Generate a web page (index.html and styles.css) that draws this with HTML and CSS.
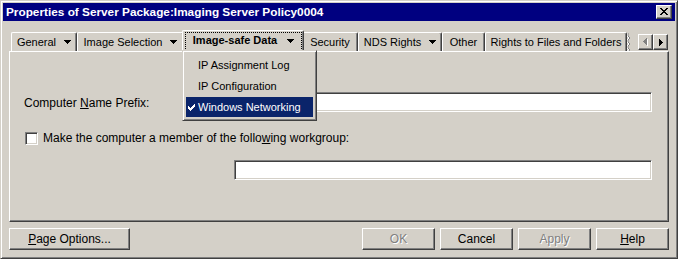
FILE: index.html
```html
<!DOCTYPE html>
<html lang="en">
<head>
    <meta charset="UTF-8">
    <title>Properties of Server Package</title>
    <link rel="stylesheet" href="styles.css">
</head>
<body>
    <div class="window">
        <div class="titlebar">
            <span class="title">Properties of Server Package:Imaging Server Policy0004</span>
            <span class="close-btn">
                <svg width="8" height="7" viewBox="0 0 8 7"><path d="M0 0h2v1H0zM6 0h2v1H6zM1 1h2v1H1zM5 1h2v1H5zM2 2h4v1H2zM3 3h2v1H3zM2 4h4v1H2zM1 5h2v1H1zM5 5h2v1H5zM0 6h2v1H0zM6 6h2v1H6z" fill="#000"/></svg>
            </span>
        </div>

        <div class="content">
            <div class="tabstrip">
                <div class="tab tab-general">General <svg class="caret" width="7" height="4"><path d="M0 0h7v1H0zM1 1h5v1H1zM2 2h3v1H2zM3 3h1v1H3z"/></svg></div>
                <div class="tab tab-image">Image Selection <svg class="caret" width="7" height="4"><path d="M0 0h7v1H0zM1 1h5v1H1zM2 2h3v1H2zM3 3h1v1H3z"/></svg></div>
                <div class="tab tab-safe selected">Image-safe Data <svg class="caret" width="7" height="4"><path d="M0 0h7v1H0zM1 1h5v1H1zM2 2h3v1H2zM3 3h1v1H3z"/></svg><span class="focus"></span></div>
                <div class="tab tab-security">Security</div>
                <div class="tab tab-nds">NDS Rights <svg class="caret" width="7" height="4"><path d="M0 0h7v1H0zM1 1h5v1H1zM2 2h3v1H2zM3 3h1v1H3z"/></svg></div>
                <div class="tab tab-other">Other</div>
                <div class="tab tab-rights">Rights to Files and Folders</div>
                <svg class="tab-cut" width="5" height="18" viewBox="0 0 5 18"><path d="M1 0v3l2 2-2 2v2l2 2-2 2v2l2 2-2 1" fill="none" stroke="#808080"/><path d="M0 0v3l2 2-2 2v2l2 2-2 2v2l2 2-2 1" fill="none" stroke="#fff"/></svg>
                <div class="tab-scroll">
                    <span class="scroll-btn">
                        <svg width="5" height="8" viewBox="0 0 5 8"><path d="M4 1h1v7H4zM3 2h1v5H3zM2 3h1v3H2zM1 4h1v1H1z" fill="#fff"/><path d="M3 0h1v7H3zM2 1h1v5H2zM1 2h1v3H1zM0 3h1v1H0z" fill="#808080"/></svg>
                    </span>
                    <span class="scroll-btn">
                        <svg width="4" height="7" viewBox="0 0 4 7"><path d="M0 0h1v7H0zM1 1h1v5H1zM2 2h1v3H2zM3 3h1v1H3z" fill="#000"/></svg>
                    </span>
                </div>
            </div>

            <div class="panel">
                <div class="form-grid">
                    <label class="field-label">Computer <u>N</u>ame Prefix:</label>
                    <span class="textbox"></span>

                    <div class="check-row">
                        <span class="checkbox"></span>
                        <span>Make the computer a member of the follo<u>w</u>ing workgroup:</span>
                    </div>

                    <span class="textbox second"></span>
                </div>
            </div>

            <div class="button-row">
                <button class="btn btn-wide"><u>P</u>age Options...</button>
                <div class="actions">
                    <button class="btn" disabled>OK</button>
                    <button class="btn">Cancel</button>
                    <button class="btn" disabled>Apply</button>
                    <button class="btn"><u>H</u>elp</button>
                </div>
            </div>
        </div>

        <div class="menu">
            <div class="menu-item">IP Assignment Log</div>
            <div class="menu-item">IP Configuration</div>
            <div class="menu-item checked">
                <svg class="check" width="7" height="7" viewBox="0 0 7 7"><path d="M6 0h1v1H6zM5 1h2v1H5zM0 2h1v1H0zM4 2h3v1H4zM0 3h2v1H0zM3 3h3v1H3zM0 4h5v1H0zM1 5h3v1H1zM2 6h1v1H2z" fill="#fff"/></svg>
                Windows Networking
            </div>
        </div>
    </div>
</body>
</html>
```

FILE: styles.css
```css
body {
    margin: 0;
    background-color: #d4d0c8;
    font-family: 'Liberation Sans', Arial, sans-serif;
    font-size: 12px;
    color: #000;
}
.window {
    position: relative;
    width: 678px;
    height: 259px;
    box-sizing: border-box;
    background-color: #d4d0c8;
    border: 1px solid;
    border-color: #d4d0c8 #404040 #404040 #d4d0c8;
    box-shadow: inset 1px 1px #fff, inset -1px -1px #808080;
    padding: 2px 2px 1px 2px;
}
.titlebar {
    height: 18px;
    background-color: #000080;
    color: #fff;
    display: flex;
    align-items: center;
    justify-content: space-between;
    padding: 0 3px 0 3px;
}
.title {
    font-weight: bold;
    font-size: 11.8px;
}
.close-btn {
    width: 16px;
    height: 14px;
    box-sizing: border-box;
    background-color: #d4d0c8;
    border: 1px solid;
    border-color: #fff #404040 #404040 #fff;
    box-shadow: inset -1px -1px #808080;
    display: flex;
    align-items: center;
    justify-content: center;
    padding-bottom: 1px;
}
.close-btn svg {
    display: block;
}
.content {
    padding: 9px 6px 0 6px;
}

/* tabs */
.tabstrip {
    display: flex;
    align-items: flex-end;
    height: 21px;
    padding-left: 2px;
    font-size: 11px;
}
.tab {
    height: 19px;
    box-sizing: border-box;
    border: 1px solid;
    border-color: #fff #404040 transparent #fff;
    border-bottom: none;
    border-radius: 2px 2px 0 0;
    box-shadow: inset -1px 0 #808080;
    display: flex;
    align-items: center;
    justify-content: center;
    gap: 8px;
    white-space: nowrap;
    padding-bottom: 1px;
}
.tab .caret {
    display: block;
    margin-top: 1px;
}
.tab-general { width: 66px; }
.tab-image { width: 107px; }
.tab-security { width: 56px; }
.tab-nds { width: 84px; }
.tab-other { width: 43px; }
.tab-rights { width: 142px; }
.tab.selected {
    position: relative;
    z-index: 2;
    height: 22px;
    width: 122px;
    margin: 0 -2px -1px -2px;
    background-color: #d4d0c8;
    font-weight: bold;
    gap: 10px;
    padding: 0 0 3px 1px;
}
.focus {
    position: absolute;
    top: 1px;
    left: 2px;
    right: 1px;
    bottom: 1px;
    border: 1px dotted #000;
}
.tab-cut {
    display: block;
}
.tab-scroll {
    display: flex;
    margin-left: auto;
    margin-right: 1px;
    margin-bottom: 1px;
}
.scroll-btn {
    width: 15px;
    height: 16px;
    box-sizing: border-box;
    border: 1px solid;
    border-color: #fff #404040 #404040 #fff;
    box-shadow: inset -1px -1px #808080;
    display: flex;
    align-items: center;
    justify-content: center;
}
.scroll-btn svg {
    display: block;
}

/* page body */
.panel {
    position: relative;
    z-index: 1;
    height: 171px;
    box-sizing: border-box;
    border: 1px solid;
    border-color: #fff #404040 #404040 #fff;
    box-shadow: inset -1px -1px #808080;
    padding: 40px 16px 0 14px;
}
.form-grid {
    display: grid;
    grid-template-columns: 210px 1fr;
    align-items: center;
}
.field-label {
    padding-top: 1px;
}
.textbox {
    display: block;
    height: 20px;
    box-sizing: border-box;
    background-color: #fff;
    border: 1px solid;
    border-color: #808080 #fff #fff #808080;
    box-shadow: inset 1px 1px #404040, inset -1px -1px #d4d0c8;
}
.textbox.second {
    grid-column: 2;
    margin-top: 15px;
}
.check-row {
    grid-column: 1 / 3;
    display: flex;
    align-items: center;
    gap: 5px;
    margin-top: 19px;
    padding-left: 1px;
}
.checkbox {
    width: 13px;
    height: 13px;
    box-sizing: border-box;
    background-color: #fff;
    border: 1px solid;
    border-color: #808080 #fff #fff #808080;
    box-shadow: inset 1px 1px #404040, inset -1px -1px #d4d0c8;
}

/* buttons */
.button-row {
    display: flex;
    justify-content: space-between;
    margin-top: 6px;
}
.actions {
    display: flex;
    gap: 5px;
}
.btn {
    width: 73px;
    height: 22px;
    box-sizing: border-box;
    background-color: #d4d0c8;
    border: 1px solid;
    border-color: #fff #404040 #404040 #fff;
    box-shadow: inset -1px -1px #808080;
    font-family: 'Liberation Sans', Arial, sans-serif;
    font-size: 12px;
    color: #000;
    padding: 0 0 1px 0;
}
.btn-wide {
    width: 121px;
}
.btn:disabled {
    color: #808080;
    text-shadow: 1px 1px #fff;
}

/* dropdown */
.menu {
    position: absolute;
    left: 181px;
    top: 49px;
    z-index: 5;
    width: 135px;
    box-sizing: border-box;
    background-color: #d4d0c8;
    border: 1px solid;
    border-color: #d4d0c8 #404040 #404040 #d4d0c8;
    box-shadow: inset 1px 1px #fff, inset -1px -1px #808080;
    padding: 4px 3px 3px 3px;
    display: flex;
    flex-direction: column;
    gap: 1px;
    font-size: 11px;
}
.menu-item {
    position: relative;
    height: 20px;
    line-height: 20px;
    padding-left: 12px;
    white-space: nowrap;
}
.menu-item.checked {
    background-color: #0a246a;
    color: #fff;
}
.check {
    position: absolute;
    left: 2px;
    top: 7px;
}
```
